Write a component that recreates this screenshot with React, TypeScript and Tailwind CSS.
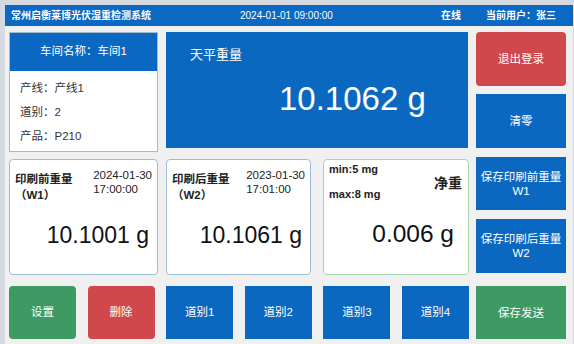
import React from 'react';

const FONT = { fontFamily: '"Liberation Sans", "Noto Sans CJK SC", sans-serif' };

function WeightCard({
  title,
  code,
  date,
  time,
  value,
  width,
}: {
  title: string;
  code: string;
  date: string;
  time: string;
  value: string;
  width: string;
}) {
  return (
    <div className={`${width} h-[116px] bg-white border border-[#9fbcd6] rounded-[4px] flex flex-col`}>
      <div className="flex justify-between pl-[5px] pr-[5px] pt-[8px]">
        <div className="font-bold text-[11.5px] leading-[16px] text-[#222] pt-[3px]">
          <div>{title}</div>
          <div>{code}</div>
        </div>
        <div className="text-[11.5px] leading-[14px] text-[#222]">
          <div>{date}</div>
          <div>{time}</div>
        </div>
      </div>
      <div className="mt-auto mb-[25px] pr-[8px] text-right text-[23px] leading-[28px] text-[#111]">{value}</div>
    </div>
  );
}

function SideButton({ children, className }: { children: React.ReactNode; className: string }) {
  return (
    <div className={`w-[90px] flex flex-col items-center justify-center text-white text-[11.5px] leading-[14px] text-center ${className}`}>
      {children}
    </div>
  );
}

function BottomButton({ label, className }: { label: string; className: string }) {
  return (
    <div className={`w-[67px] h-[53px] flex items-center justify-center text-white text-[11.5px] ${className}`}>{label}</div>
  );
}

export default function App() {
  return (
    <div className="w-[574px] h-[344px] bg-[#d5dae0] pl-[5px] pt-[5px] pr-px overflow-hidden" style={FONT}>
      <div className="h-[21px] bg-[#0b69c3] flex items-center text-white text-[10px] pl-[6px]">
        <div className="font-bold w-[229px]">常州启衡莱博光伏湿重检测系统</div>
        <div className="w-[201px]">2024-01-01 09:00:00</div>
        <div className="font-bold w-[45px]">在线</div>
        <div className="font-bold">当前用户：张三</div>
      </div>

      <div className="h-[318px] bg-[#f0f0f0] pl-[4px] pt-[6px] flex gap-[7px]">
        <div className="w-[460px] flex flex-col">
          <div className="flex items-start gap-[8px] h-[120px]">
            <div className="w-[149px] h-[120px] bg-white border border-[#a3bbd1] flex flex-col">
              <div className="h-[38px] bg-[#0b68c2] text-white text-[11.5px] flex items-center justify-center">
                车间名称：车间1
              </div>
              <div className="px-[10px] pt-[5px] text-[11.5px] text-[#333]">
                <div className="h-[24px] leading-[24px]">产线：产线1</div>
                <div className="h-[24px] leading-[24px]">道别：2</div>
                <div className="h-[24px] leading-[24px]">产品：P210</div>
              </div>
            </div>
            <div className="w-[302px] h-[116px] bg-[#0b68c0] text-white flex flex-col">
              <div className="pl-[24px] pt-[14px] text-[13px] leading-[18px]">天平重量</div>
              <div className="pl-[113px] pt-[17px] text-[33px] leading-[36px]">10.1062 g</div>
            </div>
          </div>

          <div className="flex h-[116px] mt-[7px]">
            <WeightCard width="w-[149px]" title="印刷前重量" code="（W1）" date="2024-01-30" time="17:00:00" value="10.1001 g" />
            <div className="ml-[8px]">
              <WeightCard width="w-[145px]" title="印刷后重量" code="（W2）" date="2023-01-30" time="17:01:00" value="10.1061 g" />
            </div>
            <div className="ml-[12px] w-[146px] h-[116px] bg-white border border-[#a9d3b4] rounded-[4px] flex flex-col relative">
              <div className="pl-[5px] pt-[3px] font-bold text-[11px] leading-[12px] text-[#222]">
                <div className="h-[12px]">min:5 mg</div>
                <div className="h-[12px] mt-[13px]">max:8 mg</div>
              </div>
              <div className="absolute right-[6px] top-[14px] font-bold text-[14px] leading-[18px] text-[#222]">净重</div>
              <div className="mt-auto mb-[26px] pr-[14px] text-right text-[24.5px] leading-[28px] text-[#111]">0.006 g</div>
            </div>
          </div>

          <div className="flex justify-between h-[53px] mt-[11px]">
            <BottomButton label="设置" className="bg-[#3e9a63] rounded-[4px]" />
            <BottomButton label="删除" className="bg-[#d0484b] rounded-[4px]" />
            <BottomButton label="道别1" className="bg-[#0b68c1]" />
            <BottomButton label="道别2" className="bg-[#0b68c1]" />
            <BottomButton label="道别3" className="bg-[#0b68c1]" />
            <BottomButton label="道别4" className="bg-[#0b68c1]" />
          </div>
        </div>

        <div className="w-[90px] flex flex-col">
          <SideButton className="h-[54px] bg-[#d0484b] rounded-[4px]">退出登录</SideButton>
          <SideButton className="h-[54px] mt-[8px] bg-[#0b68c1]">清零</SideButton>
          <SideButton className="h-[53px] mt-[9px] bg-[#0b68c1]">
            <div>保存印刷前重量</div>
            <div>W1</div>
          </SideButton>
          <SideButton className="h-[54px] mt-[9px] bg-[#0b68c1]">
            <div>保存印刷后重量</div>
            <div>W2</div>
          </SideButton>
          <SideButton className="h-[53px] mt-[13px] bg-[#3e9a63]">保存发送</SideButton>
        </div>
      </div>
    </div>
  );
}
